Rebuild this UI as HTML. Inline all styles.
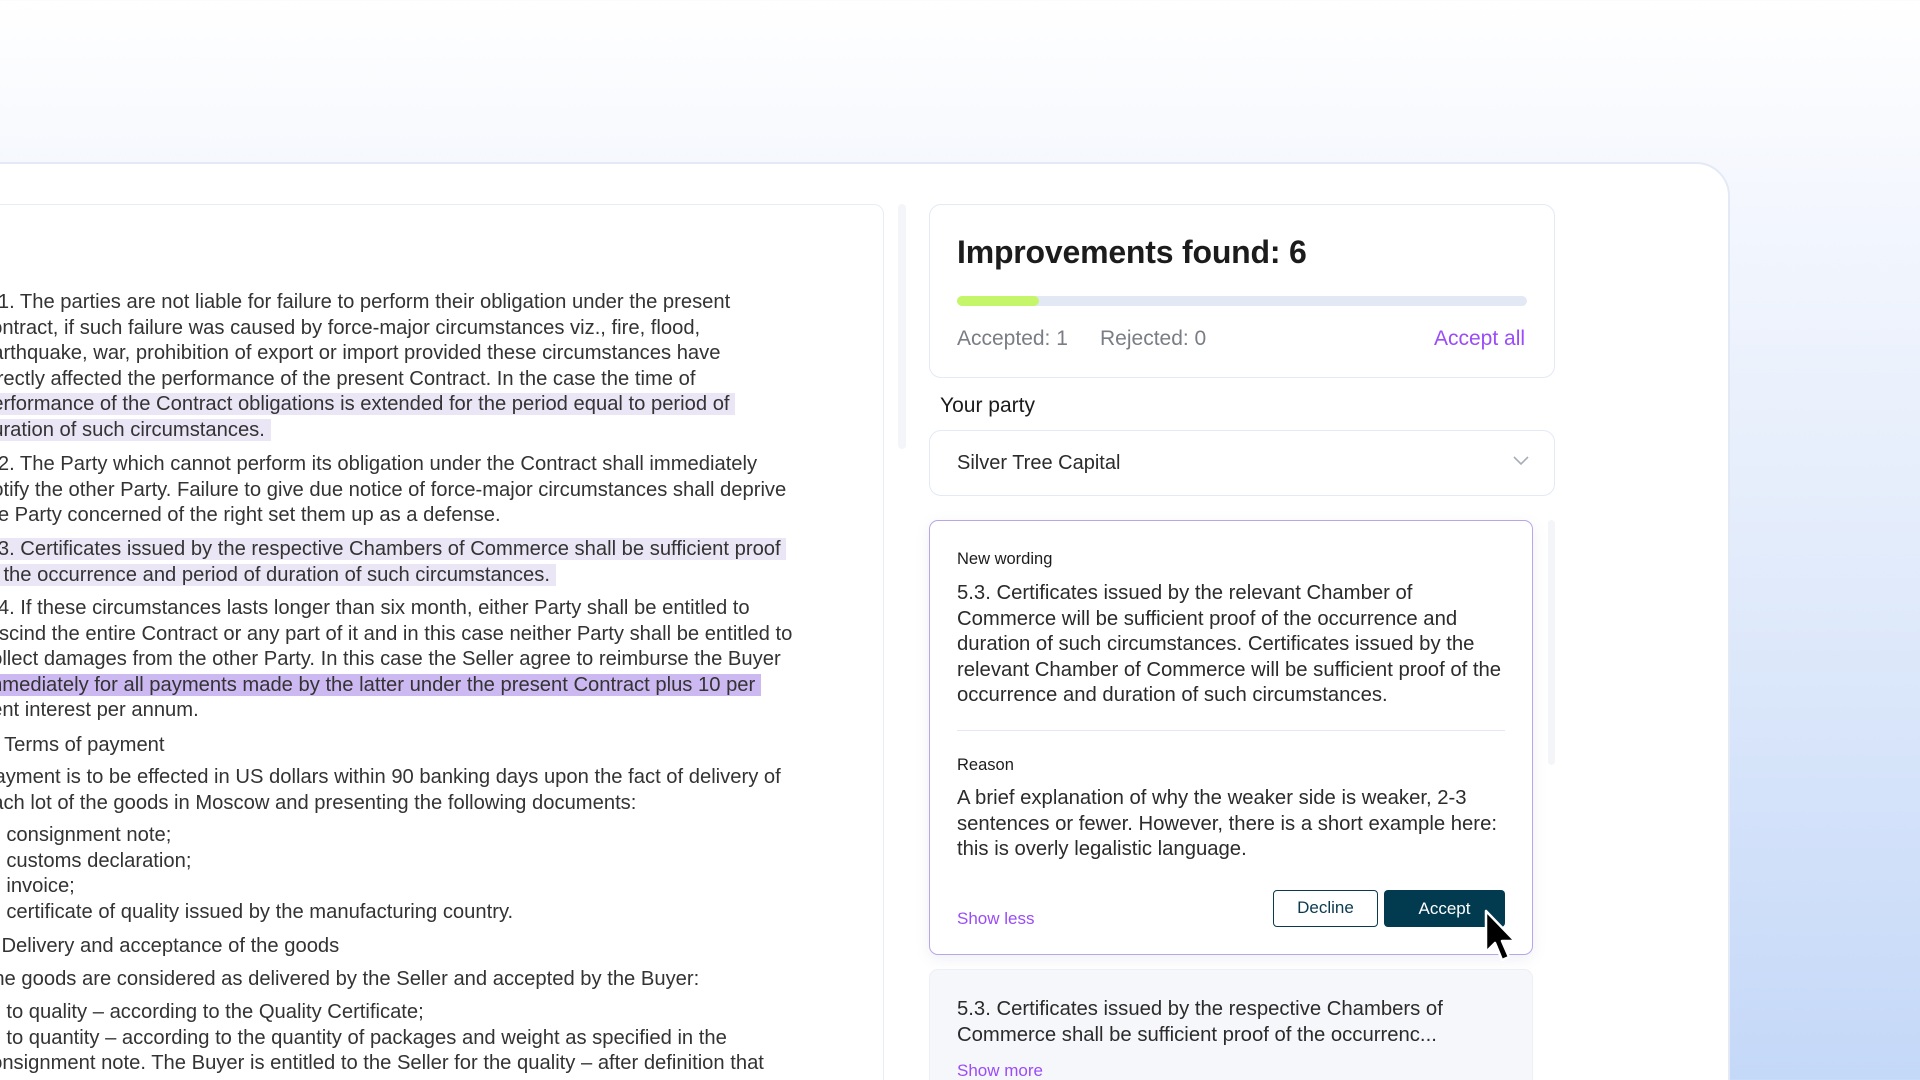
<!DOCTYPE html>
<html style="width:1920px;height:1080px;overflow:hidden"><head><meta charset="utf-8"><style>
*{margin:0;padding:0;box-sizing:border-box}
body{width:1920px;height:1080px;overflow:hidden;position:relative;font-family:"Liberation Sans",sans-serif;color:#2b2b2b;
background:linear-gradient(180deg,#ffffff 0%,#f4f7fe 18%,#e3ecfb 50%,#c4d8f8 100%);}
.abs{position:absolute}
.container{left:-40px;top:162px;width:1770px;height:940px;background:#fff;border:2px solid #e3eaf6;border-radius:0 34px 0 0;}
.doc{left:-20px;top:204px;width:904px;height:900px;background:#fff;border:1.5px solid #e8ecf4;border-radius:10px}
.p{position:absolute;left:-19px;font-size:20.2px;line-height:25.5px;color:#333;white-space:nowrap}
.hl{background:#ebe6f6}
.hl2{background:#cdb9f2}
.card{background:#fff;border:1.5px solid #e3e9f5;border-radius:12px}
.rt{font-size:20.3px;line-height:25.5px;color:#2b2b2b;white-space:nowrap}
</style></head><body>
<div class="abs container"></div>
<div class="abs doc"></div>
<div class="abs" style="left:898px;top:204px;width:8px;height:245px;background:#f4f5f8;border-radius:4px"></div>

<div class="p" style="top:290px">5.1. The parties are not liable for failure to perform their obligation under the present<br>contract, if such failure was caused by force-major circumstances viz., fire, flood,<br>earthquake, war, prohibition of export or import provided these circumstances have<br>directly affected the performance of the present Contract. In the case the time of<br><span class="hl">performance of the Contract obligations is extended for the period equal to period of&nbsp;</span><br><span class="hl">duration of such circumstances.&nbsp;</span></div>
<div class="p" style="top:452px">5.2. The Party which cannot perform its obligation under the Contract shall immediately<br>notify the other Party. Failure to give due notice of force-major circumstances shall deprive<br>the Party concerned of the right set them up as a defense.</div>
<div class="p" style="top:537px"><span class="hl">5.3. Certificates issued by the respective Chambers of Commerce shall be sufficient proof&nbsp;</span><br><span class="hl">of the occurrence and period of duration of such circumstances.&nbsp;</span></div>
<div class="p" style="top:596px">5.4. If these circumstances lasts longer than six month, either Party shall be entitled to<br>rescind the entire Contract or any part of it and in this case neither Party shall be entitled to<br>collect damages from the other Party. In this case the Seller agree to reimburse the Buyer<br><span class="hl2">immediately for all payments made by the latter under the present Contract plus 10 per&nbsp;</span><br>cent interest per annum.</div>
<div class="p" style="top:733px;left:-18px">6. Terms of payment</div>
<div class="p" style="top:765px">Payment is to be effected in US dollars within 90 banking days upon the fact of delivery of<br>each lot of the goods in Moscow and presenting the following documents:</div>
<div class="p" style="top:823px;left:-6px">- consignment note;<br>- customs declaration;<br>- invoice;<br>- certificate of quality issued by the manufacturing country.</div>
<div class="p" style="top:934px;left:-21px">7. Delivery and acceptance of the goods</div>
<div class="p" style="top:967px">The goods are considered as delivered by the Seller and accepted by the Buyer:</div>
<div class="p" style="top:1000px;left:-6px">- to quality – according to the Quality Certificate;<br>- to quantity – according to the quantity of packages and weight as specified in the</div>
<div class="p" style="top:1051px">consignment note. The Buyer is entitled to the Seller for the quality – after definition that<br>the quality does not correspond to the data of the Certificate of Quality issued by the</div>

<!-- Improvements card -->
<div class="abs card" style="left:929px;top:204px;width:626px;height:174px"></div>
<div class="abs" style="left:957px;top:234px;font-size:32px;font-weight:700;color:#1c1c1c;letter-spacing:-0.2px">Improvements found: 6</div>
<div class="abs" style="left:957px;top:296px;width:570px;height:10px;background:#e2e9f4;border-radius:5px"></div>
<div class="abs" style="left:957px;top:296px;width:82px;height:10px;background:#c5f66a;border-radius:5px"></div>
<div class="abs" style="left:957px;top:327px;font-size:21px;color:#7a7d85">Accepted: 1</div>
<div class="abs" style="left:1100px;top:327px;font-size:21px;color:#7a7d85">Rejected: 0</div>
<div class="abs" style="left:1434px;top:327px;font-size:21px;color:#9a4cf7">Accept all</div>

<div class="abs" style="left:940px;top:394px;font-size:21px;color:#1c1c1c">Your party</div>
<div class="abs card" style="left:929px;top:430px;width:626px;height:66px"></div>
<div class="abs" style="left:957px;top:452px;font-size:20px;color:#2b2b2b">Silver Tree Capital</div>
<svg class="abs" style="left:1512px;top:455px" width="18" height="12" viewBox="0 0 18 12"><path d="M2 2 L9 9 L16 2" fill="none" stroke="#a8adb8" stroke-width="1.6"/></svg>

<!-- Suggestion card -->
<div class="abs" style="left:929px;top:520px;width:604px;height:435px;background:#fff;border:1.8px solid #b8a6e6;border-radius:9px;box-shadow:0 4px 14px rgba(120,130,170,0.12)"></div>
<div class="abs" style="left:1548px;top:520px;width:7px;height:245px;background:#f4f5f8;border-radius:4px"></div>
<div class="abs" style="left:957px;top:550px;font-size:16.5px;color:#1c1c1c">New wording</div>
<div class="abs rt" style="left:957px;top:581px">5.3. Certificates issued by the relevant Chamber of<br>Commerce will be sufficient proof of the occurrence and<br>duration of such circumstances. Certificates issued by the<br>relevant Chamber of Commerce will be sufficient proof of the<br>occurrence and duration of such circumstances.</div>
<div class="abs" style="left:957px;top:730px;width:548px;height:1px;background:#e3e8f3"></div>
<div class="abs" style="left:957px;top:756px;font-size:16.5px;color:#1c1c1c">Reason</div>
<div class="abs rt" style="left:957px;top:786px">A brief explanation of why the weaker side is weaker, 2-3<br>sentences or fewer. However, there is a short example here:<br>this is overly legalistic language.</div>
<div class="abs" style="left:957px;top:909px;font-size:17px;color:#9a4cf7">Show less</div>
<div class="abs" style="left:1273px;top:890px;width:105px;height:37px;border:1.6px solid #0b3a4e;border-radius:4px;background:#fff;color:#0b3a4e;font-size:17px;text-align:center;line-height:34px">Decline</div>
<div class="abs" style="left:1384px;top:890px;width:121px;height:37px;background:#023a4f;border-radius:4px;color:#fff;font-size:17px;text-align:center;line-height:37px">Accept</div>
<svg class="abs" style="left:1482px;top:908px" width="38" height="60" viewBox="0 0 38 60"><path d="M4 3 L4 44 L13 35 L20 52 L27 49 L20 33 L33 33 Z" fill="#000" stroke="#fff" stroke-width="2.5" stroke-linejoin="round"/></svg>

<div class="abs" style="left:929px;top:969px;width:604px;height:140px;background:#f6f7fa;border:1.5px solid #eceff5;border-radius:9px"></div>
<div class="abs rt" style="left:957px;top:997px">5.3. Certificates issued by the respective Chambers of<br>Commerce shall be sufficient proof of the occurrenc...</div>
<div class="abs" style="left:957px;top:1061px;font-size:17px;color:#9a4cf7">Show more</div>
</body></html>
